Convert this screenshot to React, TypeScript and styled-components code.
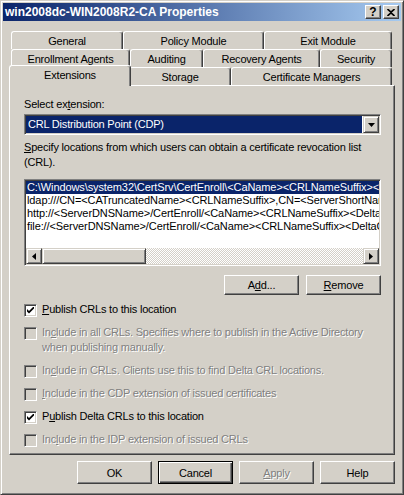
import React from 'react';
import styled, { createGlobalStyle, css } from 'styled-components';

const face = '#d4d0c8';
const shadow = '#808080';
const dark = '#404040';
const navy = '#0a246a';

const GlobalStyle = createGlobalStyle`
  html, body {
    margin: 0;
    padding: 0;
    background: ${face};
  }
  body {
    font-family: "Liberation Sans", Arial, sans-serif;
    font-size: 11px;
    letter-spacing: -0.2px;
    color: #000;
  }
  * {
    box-sizing: border-box;
  }
`;

const raised = css`
  border: 1px solid;
  border-color: #fff ${dark} ${dark} #fff;
  box-shadow: inset -1px -1px ${shadow};
  background: ${face};
`;

const sunken = css`
  border: 1px solid;
  border-color: ${shadow} #fff #fff ${shadow};
  box-shadow: inset 1px 1px ${dark}, inset -1px -1px ${face};
  padding: 1px;
`;

const Window = styled.div`
  width: 404px;
  height: 495px;
  background: ${face};
  border: 1px solid;
  border-color: ${face} ${dark} ${dark} ${face};
  box-shadow: inset 1px 1px #fff, inset -1px -1px ${shadow};
  padding: 2px;
  display: flex;
  flex-direction: column;
`;

const TitleBar = styled.div`
  height: 18px;
  display: flex;
  align-items: center;
  justify-content: space-between;
  padding: 0 2px 0 2px;
  background: linear-gradient(90deg, ${navy} 0%, #a6caf0 100%);
`;

const TitleText = styled.span`
  color: #fff;
  font-weight: bold;
  font-size: 12px;
  letter-spacing: 0;
  white-space: nowrap;
`;

const TitleButtons = styled.div`
  display: flex;
  gap: 2px;
`;

const TitleButton = styled.div`
  ${raised};
  width: 16px;
  height: 14px;
  display: flex;
  align-items: center;
  justify-content: center;
  font-weight: bold;
  font-size: 12px;
  letter-spacing: 0;
  line-height: 12px;
`;

const Body = styled.div`
  padding: 10px 0 0 6px;
  display: flex;
  flex-direction: column;
`;

const Tabs = styled.div`
  margin-left: 2px;
  width: 381px;
  display: flex;
  flex-direction: column;
`;

const TabRow = styled.div`
  display: flex;
  height: 18px;
`;

const Tab = styled.div<{ $w: number; $active?: boolean }>`
  flex: 0 0 ${(p) => p.$w}px;
  height: 18px;
  display: flex;
  align-items: center;
  justify-content: center;
  padding-top: 1px;
  background: ${face};
  border-top: 1px solid #fff;
  border-left: 1px solid #fff;
  border-right: 1px solid ${dark};
  box-shadow: inset -1px 0 ${shadow};
  border-radius: 3px 3px 0 0;
  white-space: nowrap;
  ${(p) =>
    p.$active &&
    css`
      position: relative;
      z-index: 1;
      flex-basis: ${p.$w + 4}px;
      height: 21px;
      margin: -2px -2px 0 -2px;
      padding: 0 0 3px 0;
    `}
`;

const Panel = styled.div`
  width: 386px;
  height: 370px;
  border: 1px solid;
  border-color: #fff ${dark} ${dark} #fff;
  box-shadow: inset -1px -1px ${shadow};
  padding: 12px 13px 0 14px;
  display: flex;
  flex-direction: column;
`;

const Label = styled.div`
  line-height: 13px;
  white-space: nowrap;
`;

const Key = styled.span`
  text-decoration: underline;
  text-underline-offset: 1px;
`;

const Combo = styled.div`
  ${sunken};
  margin-top: 3px;
  height: 21px;
  display: flex;
  background: #fff;
`;

const ComboValue = styled.div`
  flex: 1;
  margin-right: 1px;
  background: ${navy};
  color: #fff;
  line-height: 17px;
  padding-left: 2px;
  white-space: nowrap;
`;

const ArrowButton = styled.div<{ $w?: number }>`
  border: 1px solid;
  border-color: ${face} ${dark} ${dark} ${face};
  box-shadow: inset 1px 1px #fff, inset -1px -1px ${shadow};
  background: ${face};
  flex: 0 0 ${(p) => p.$w ?? 16}px;
  display: flex;
  align-items: center;
  justify-content: center;
`;

const Hint = styled.div`
  margin-top: 5px;
  line-height: 15px;
  white-space: nowrap;
`;

const ListBox = styled.div`
  ${sunken};
  margin-top: 9px;
  height: 87px;
  background: #fff;
  display: flex;
  flex-direction: column;
`;

const ListRows = styled.div`
  flex: 1;
  overflow: hidden;
`;

const ListRow = styled.div<{ $selected?: boolean }>`
  height: 13px;
  line-height: 13px;
  padding-left: 1px;
  letter-spacing: -0.1px;
  white-space: nowrap;
  overflow: hidden;
  background: ${(p) => (p.$selected ? navy : 'transparent')};
  color: ${(p) => (p.$selected ? '#fff' : '#000')};
`;

const ScrollBar = styled.div`
  height: 16px;
  display: flex;
`;

const Thumb = styled.div`
  border: 1px solid;
  border-color: ${face} ${dark} ${dark} ${face};
  box-shadow: inset 1px 1px #fff, inset -1px -1px ${shadow};
  background: ${face};
  flex: 0 0 104px;
`;

const Track = styled.div`
  flex: 1;
  background: repeating-conic-gradient(${face} 0 25%, #fff 0 50%) 0 0 / 2px 2px;
`;

const ActionRow = styled.div<{ $gap: number; $top?: number }>`
  display: flex;
  justify-content: flex-end;
  gap: ${(p) => p.$gap}px;
  margin-top: ${(p) => p.$top ?? 0}px;
`;

const Button = styled.div<{ $h?: number; $default?: boolean; $disabled?: boolean }>`
  ${raised};
  width: 75px;
  height: ${(p) => p.$h ?? 23}px;
  display: flex;
  align-items: center;
  justify-content: center;
  color: ${(p) => (p.$disabled ? shadow : '#000')};
  text-shadow: ${(p) => (p.$disabled ? '1px 1px #fff' : 'none')};
  ${(p) =>
    p.$default &&
    css`
      border: 1px solid #000;
      box-shadow: inset 1px 1px #fff, inset -1px -1px ${dark}, inset -2px -2px ${shadow};
    `}
`;

const Checks = styled.div`
  margin-top: 7px;
  display: flex;
  flex-direction: column;
  gap: 8px;
`;

const CheckRow = styled.div<{ $disabled?: boolean }>`
  display: flex;
  align-items: flex-start;
  gap: 5px;
  line-height: 15px;
  color: ${(p) => (p.$disabled ? shadow : '#000')};
  text-shadow: ${(p) => (p.$disabled ? '1px 1px #fff' : 'none')};
  white-space: nowrap;
`;

const Box = styled.div<{ $disabled?: boolean }>`
  ${sunken};
  width: 13px;
  height: 13px;
  margin-top: 2px;
  flex: 0 0 13px;
  background: ${(p) => (p.$disabled ? face : '#fff')};
  display: flex;
  align-items: center;
  justify-content: center;
`;

const Footer = styled.div`
  width: 386px;
  margin-top: 6px;
`;

const Tri = ({ dir }: { dir: 'left' | 'right' | 'down' }) => {
  if (dir === 'down') {
    return (
      <svg width="7" height="4" viewBox="0 0 7 4">
        <path d="M0 0H7L3.5 4Z" fill="#000" />
      </svg>
    );
  }
  return (
    <svg width="4" height="7" viewBox="0 0 4 7">
      <path d={dir === 'left' ? 'M4 0V7L0 3.5Z' : 'M0 0V7L4 3.5Z'} fill="#000" />
    </svg>
  );
};

const CheckMark = () => (
  <svg width="7" height="7" viewBox="0 0 7 7">
    <path d="M0 2L2 4L7 -1V1.5L2 6.5L0 4.5Z" fill="#000" />
  </svg>
);

const CloseGlyph = () => (
  <svg width="8" height="7" viewBox="0 0 8 7">
    <path d="M0.5 0L4 3.2L7.5 0M0.5 7L4 3.8L7.5 7" stroke="#000" strokeWidth="1.6" fill="none" />
  </svg>
);

const tabRows = [
  [
    { t: 'General', w: 112 },
    { t: 'Policy Module', w: 141 },
    { t: 'Exit Module', w: 128 },
  ],
  [
    { t: 'Enrollment Agents', w: 119 },
    { t: 'Auditing', w: 73 },
    { t: 'Recovery Agents', w: 117 },
    { t: 'Security', w: 72 },
  ],
  [
    { t: 'Extensions', w: 118, active: true },
    { t: 'Storage', w: 102 },
    { t: 'Certificate Managers', w: 161 },
  ],
];

// the list is narrower than its entries; the box clips them as the real control does
const locations = [
  'C:\\Windows\\system32\\CertSrv\\CertEnroll\\<CaName><CRLNameSuffix><DeltaCRLAllowed>.crl',
  'ldap:///CN=<CATruncatedName><CRLNameSuffix>,CN=<ServerShortName>,CN=CDP',
  'http://<ServerDNSName>/CertEnroll/<CaName><CRLNameSuffix><DeltaCRLAllowed>.crl',
  'file://<ServerDNSName>/CertEnroll/<CaName><CRLNameSuffix><DeltaCRLAllowed>.crl',
];

export default function App() {
  return (
    <>
      <GlobalStyle />
      <Window>
        <TitleBar>
          <TitleText>win2008dc-WIN2008R2-CA Properties</TitleText>
          <TitleButtons>
            <TitleButton>?</TitleButton>
            <TitleButton>
              <CloseGlyph />
            </TitleButton>
          </TitleButtons>
        </TitleBar>
        <Body>
          <Tabs>
            {tabRows.map((row, i) => (
              <TabRow key={i}>
                {row.map((tab) => (
                  <Tab key={tab.t} $w={tab.w} $active={'active' in tab && tab.active}>
                    {tab.t}
                  </Tab>
                ))}
              </TabRow>
            ))}
          </Tabs>
          <Panel>
            <Label>
              Select ex<Key>t</Key>ension:
            </Label>
            <Combo>
              <ComboValue>CRL Distribution Point (CDP)</ComboValue>
              <ArrowButton>
                <Tri dir="down" />
              </ArrowButton>
            </Combo>
            <Hint>
              <Key>S</Key>pecify locations from which users can obtain a certificate revocation list
              <br />
              (CRL).
            </Hint>
            <ListBox>
              <ListRows>
                {locations.map((loc, i) => (
                  <ListRow key={loc} $selected={i === 0}>
                    {loc}
                  </ListRow>
                ))}
              </ListRows>
              <ScrollBar>
                <ArrowButton>
                  <Tri dir="left" />
                </ArrowButton>
                <Thumb />
                <Track />
                <ArrowButton>
                  <Tri dir="right" />
                </ArrowButton>
              </ScrollBar>
            </ListBox>
            <ActionRow $gap={7} $top={9}>
              <Button $h={20}>
                A<Key>d</Key>d...
              </Button>
              <Button $h={20}>
                <Key>R</Key>emove
              </Button>
            </ActionRow>
            <Checks>
              <CheckRow>
                <Box>
                  <CheckMark />
                </Box>
                <span>
                  <Key>P</Key>ublish CRLs to this location
                </span>
              </CheckRow>
              <CheckRow $disabled>
                <Box $disabled />
                <span>
                  In<Key>c</Key>lude in all CRLs. Specifies where to publish in the Active Directory
                  <br />
                  when publishing manually.
                </span>
              </CheckRow>
              <CheckRow $disabled>
                <Box $disabled />
                <span>
                  In<Key>c</Key>lude in CRLs. Clients use this to find Delta CRL locations.
                </span>
              </CheckRow>
              <CheckRow $disabled>
                <Box $disabled />
                <span>
                  <Key>I</Key>nclude in the CDP extension of issued certificates
                </span>
              </CheckRow>
              <CheckRow>
                <Box>
                  <CheckMark />
                </Box>
                <span>
                  P<Key>u</Key>blish Delta CRLs to this location
                </span>
              </CheckRow>
              <CheckRow $disabled>
                <Box $disabled />
                <span>
                  Inc<Key>l</Key>ude in the IDP extension of issued CRLs
                </span>
              </CheckRow>
            </Checks>
          </Panel>
          <Footer>
            <ActionRow $gap={6}>
              <Button>OK</Button>
              <Button $default>Cancel</Button>
              <Button $disabled>
                <Key>A</Key>pply
              </Button>
              <Button>Help</Button>
            </ActionRow>
          </Footer>
        </Body>
      </Window>
    </>
  );
}
